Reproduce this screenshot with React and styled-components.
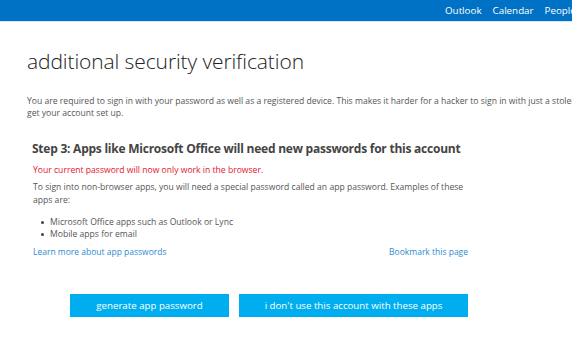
import React from "react";
import styled, { createGlobalStyle } from "styled-components";

const GlobalStyle = createGlobalStyle`
  html, body {
    margin: 0;
    padding: 0;
    background: #fff;
    overflow: hidden;
  }
  body {
    font-family: "Open Sans", "Noto Sans", sans-serif;
    color: #444;
  }
`;

const navItems = ["Outlook", "Calendar", "People"];
const examples = [
  "Microsoft Office apps such as Outlook or Lync",
  "Mobile apps for email",
];

function App() {
  return (
    <>
      <GlobalStyle />
      <TopBar>
        <Nav>
          {navItems.map((item) => (
            <NavLink key={item}>{item}</NavLink>
          ))}
        </Nav>
      </TopBar>
      <Page>
        <Title>additional security verification</Title>
        <Intro>
          You are required to sign in with your password as well as a registered device. This makes it harder for a hacker to sign in with just a stolen password.
          <br />
          get your account set up.
        </Intro>
        <StepBox>
          <StepTitle>Step 3: Apps like Microsoft Office will need new passwords for this account</StepTitle>
          <Warning>Your current password will now only work in the browser.</Warning>
          <Text>
            To sign into non-browser apps, you will need a special password called an app password. Examples of these apps are:
          </Text>
          <List>
            {examples.map((ex) => (
              <li key={ex}>{ex}</li>
            ))}
          </List>
          <LinkRow>
            <Link>Learn more about app passwords</Link>
            <Link>Bookmark this page</Link>
          </LinkRow>
          <Buttons>
            <Button width={159}>generate app password</Button>
            <Button width={229}>i don't use this account with these apps</Button>
          </Buttons>
        </StepBox>
      </Page>
    </>
  );
}

const TopBar = styled.header`
  height: 21px;
  background: #0072c6;
  border-bottom: 1px solid #d6e6f4;
  display: flex;
  align-items: center;
  overflow: hidden;
`;

const Nav = styled.nav`
  display: flex;
  gap: 11px;
  margin-left: 445px;
`;

const NavLink = styled.span`
  color: #fff;
  font-size: 9.8px;
  white-space: nowrap;
`;

const Page = styled.main`
  padding: 0 0 0 27px;
  width: 620px;
`;

const Title = styled.h1`
  margin: 24px 0 0;
  font-size: 21px;
  font-weight: 300;
  color: #222;
  line-height: 30px;
  letter-spacing: -0.1px;
`;

const Intro = styled.p`
  margin: 19px 0 0;
  font-size: 8.6px;
  line-height: 12px;
  color: #555;
  white-space: nowrap;
`;

const StepBox = styled.section`
  margin: 21px 0 0 5px;
  width: 436px;
`;

const StepTitle = styled.h2`
  margin: 0;
  font-size: 12px;
  font-weight: 700;
  color: #444;
  line-height: 18px;
  letter-spacing: -0.24px;
  white-space: nowrap;
`;

const Warning = styled.p`
  margin: 6px 0 0 1px;
  font-size: 8.6px;
  line-height: 12px;
  color: #e8112d;
`;

const Text = styled.p`
  margin: 5px 0 0 1px;
  font-size: 8.6px;
  line-height: 13px;
  color: #555;
`;

const List = styled.ul`
  margin: 9px 0 0;
  padding: 0 0 0 9px;
  list-style: none;
  font-size: 8.6px;
  line-height: 12px;
  color: #555;
  li {
    display: flex;
    align-items: center;
  }
  li::before {
    content: "";
    width: 3px;
    height: 3px;
    border-radius: 50%;
    background: #444;
    margin-right: 6px;
  }
`;

const LinkRow = styled.div`
  display: flex;
  justify-content: space-between;
  margin-top: 6px;
  padding-left: 1px;
`;

const Link = styled.a`
  font-size: 8.5px;
  line-height: 12px;
  color: #2e8ad0;
  cursor: pointer;
`;

const Buttons = styled.div`
  display: flex;
  justify-content: flex-end;
  gap: 10px;
  margin-top: 36px;
`;

const Button = styled.button`
  width: ${(p) => p.width}px;
  height: 23px;
  border: none;
  background: #00aeef;
  color: #fff;
  font-family: "Open Sans", "Noto Sans", sans-serif;
  font-size: 9.7px;
  padding: 0;
  cursor: pointer;
`;

export default App;
